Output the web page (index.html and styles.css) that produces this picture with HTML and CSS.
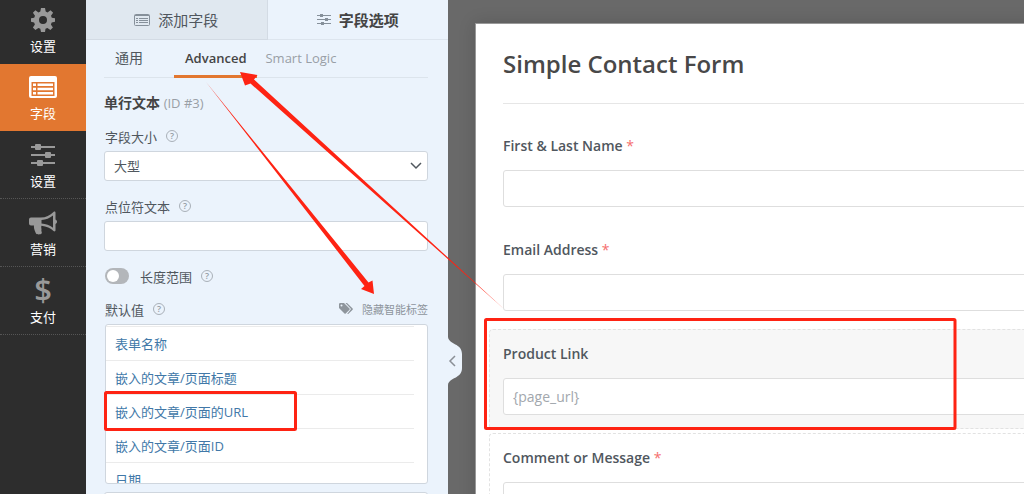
FILE: index.html
```html
<!DOCTYPE html>
<html lang="zh-CN">
<head>
  <meta charset="UTF-8">
  <meta name="viewport" content="width=device-width, initial-scale=1.0">
  <title>Simple Contact Form</title>
  <link rel="stylesheet" href="styles.css">
</head>
<body>
  <div class="builder">
    <nav class="sidebar">
      <a href="#setup" class="first">
        <svg width="24" height="24" viewBox="0 0 24 24" fill="currentColor" fill-rule="evenodd"><path d="M10 0h4l.7 3.6 1.8.8L19.600 2.300l2.500 2.500-2.100 3 .8 2L24 10.300v3.500l-3.300.7-.8 1.900 2 3-2.500 2.500-3-2-1.900.8L14 24h-4l-.7-3.300-1.900-.8-3 2-2.500-2.500 2-3-.8-1.900L0 13.800v-3.500l3.200-.5.8-2-2.100-3 2.500-2.500 3.100 2.100 1.800-.8zM12 8a4 4 0 1 0 0 8a4 4 0 0 0 0-8z"/></svg>
        <span>设置</span>
      </a>
      <a href="#fields" class="active">
        <svg width="28" height="24" viewBox="0 0 28 24" fill="currentColor" fill-rule="evenodd"><path d="M2 1h24a2 2 0 0 1 2 2v18a2 2 0 0 1-2 2H2a2 2 0 0 1-2-2V3a2 2 0 0 1 2-2zM2.500 7v14h23V7zM4 8.500h3V11H4zM8.500 8.500H24V11H8.500zM4 12.700h3v2.500H4zM8.500 12.700H24v2.500H8.500zM4 17h3v2.500H4zM8.500 17H24v2.500H8.500z"/></svg>
        <span>字段</span>
      </a>
      <a href="#settings">
        <svg width="24" height="24" viewBox="0 0 24 24" fill="currentColor"><path d="M0 3h24v2H0zM0 11h24v2H0zM0 19h24v2H0z"/><rect x="4" y="1" width="6" height="6" rx="1"/><rect x="14" y="9" width="6" height="6" rx="1"/><rect x="6" y="17" width="6" height="6" rx="1"/></svg>
        <span>设置</span>
      </a>
      <a href="#marketing">
        <svg width="28" height="24" viewBox="0 0 28 24" fill="currentColor" fill-rule="evenodd"><path d="M2 6.500h9.500C17 6.500 21 4.500 24.500 1c1-.8 2-.3 2 .8V8.500c2 .8 2 3.700 0 4.500v6.200c0 1.100-1 1.600-2 .8-3-2.700-7-4.700-12-5.200-.8 2 .5 3.500-.2 4.800.2 1.300 1 2 .2 3-1 1.200-4.500 1.200-5.500 0-1-2.600-2.500-4.800-2-8.100H2a2 2 0 0 1-2-2V8.500a2 2 0 0 1 2-2zM24 4.500c-3.500 2.800-7 4.100-11.500 4.500v3.500c4.500.4 8 1.700 11.500 4.300z"/></svg>
        <span>营销</span>
      </a>
      <a href="#payments">
        <b class="dollar">$</b>
        <span>支付</span>
      </a>
    </nav>

    <aside class="panel">
      <div class="tabs">
        <button type="button" class="tab">
          <svg width="16" height="12" viewBox="0 0 16 12" fill="none" stroke="currentColor"><rect x=".5" y=".5" width="15" height="11" rx="1"/><path d="M1 1.500h14M2 4.500h2M5 4.500h9M2 6.500h2M5 6.500h9M2 8.500h2M5 8.500h9"/></svg>
          添加字段
        </button>
        <button type="button" class="tab current">
          <svg width="14" height="12" viewBox="0 0 14 12" fill="currentColor"><path d="M0 1h14v1H0zM0 5h14v1H0zM0 9h14v1H0z"/><rect x="3" y="0" width="3" height="3"/><rect x="8" y="4" width="3" height="3"/><rect x="4" y="8" width="3" height="3"/></svg>
          字段选项
        </button>
      </div>

      <div class="options">
        <div class="subtabs">
          <a href="#general">通用</a>
          <a href="#advanced" class="current">Advanced</a>
          <a href="#logic" class="muted">Smart Logic</a>
        </div>

        <h3>单行文本 <span>(ID #3)</span></h3>

        <div class="row">
          <label for="size">字段大小</label>
          <button type="button" class="help">?</button>
        </div>
        <div class="select-box">
          <select id="size" name="size">
            <option>大型</option>
          </select>
          <svg width="12" height="8" viewBox="0 0 12 8" fill="none" stroke="currentColor" stroke-width="1.500"><path d="M1 1l5 5 5-5"/></svg>
        </div>

        <div class="row">
          <label for="placeholder">点位符文本</label>
          <button type="button" class="help">?</button>
        </div>
        <input type="text" id="placeholder" name="placeholder" class="text">

        <div class="row limit">
          <input type="checkbox" id="limit" name="limit" class="toggle">
          <label for="limit">长度范围</label>
          <button type="button" class="help">?</button>
        </div>

        <div class="row default">
          <label for="default">默认值</label>
          <button type="button" class="help">?</button>
          <a href="#tags" class="smart-tags">
            <svg width="14" height="12" viewBox="0 0 14 12" fill="currentColor" fill-rule="evenodd"><path d="M0 1.200Q0 0 1.200 0H5l5.500 5.500q.6.600 0 1.200L6.700 10.500q-.6.600-1.200 0L0 5zM2.500 1.500a1 1 0 1 0 0 2a1 1 0 0 0 0-2zM6.500 0H8l5.600 5.500q.6.600 0 1.200L9.500 10.800q-.6.500-1.200 0L12 6z"/></svg>
            隐藏智能标签
          </a>
        </div>
        <ul class="tag-list">
          <li><a href="#form_name">表单名称</a></li>
          <li><a href="#page_title">嵌入的文章/页面标题</a></li>
          <li><a href="#page_url">嵌入的文章/页面的URL</a></li>
          <li><a href="#page_id">嵌入的文章/页面ID</a></li>
          <li><a href="#date">日期</a></li>
        </ul>
        <input type="text" id="default" name="default" class="text">
      </div>

      <button type="button" class="collapse" aria-label="Collapse">
        <svg width="14" height="48" viewBox="0 0 14 48"><path fill="#ebf3fc" d="M0 0c1 8 14 6 14 17v14c0 11-13 9-14 17z"/><path d="M7 19l-5 5 5 5" fill="none" stroke="#8a8f96" stroke-width="1.500"/></svg>
      </button>
    </aside>

    <main class="preview">
      <form class="form-card">
        <h1>Simple Contact Form</h1>
        <div class="field">
          <label for="name">First &amp; Last Name <em>*</em></label>
          <input type="text" id="name" name="name">
        </div>
        <div class="field">
          <label for="email">Email Address <em>*</em></label>
          <input type="email" id="email" name="email">
        </div>
        <div class="field selected">
          <label for="link">Product Link</label>
          <input type="text" id="link" name="link" placeholder="{page_url}">
        </div>
        <div class="field outlined">
          <label for="message">Comment or Message <em>*</em></label>
          <textarea id="message" name="message"></textarea>
        </div>
      </form>
    </main>
  </div>

  <!-- red boxes and arrows over the builder -->
  <svg class="notes" width="1024" height="494" viewBox="0 0 1024 494" aria-hidden="true">
    <g fill="none" stroke="#fe2313" stroke-width="3">
      <rect x="105.500" y="392.500" width="190" height="37" rx="1"/>
      <rect x="485.500" y="319.500" width="469.500" height="109" rx="1"/>
    </g>
    <g fill="#fe2313">
      <path d="M206 82L368.500 282.500L372.500 280.500L374 294L361 289L364.500 286z"/>
      <path d="M504 309L254 79.500L257.500 75L240 72L245 85.500L250.500 83.500z"/>
    </g>
  </svg>
</body>
</html>
```

FILE: styles.css
```css
* {
  box-sizing: border-box;
}
body {
  margin: 0;
  font-family: "Open Sans", "Noto Sans CJK SC", sans-serif;
  font-size: 13px;
  color: #50575e;
  overflow: hidden;
}
a {
  text-decoration: none;
  color: inherit;
}
button, input, select, textarea {
  font: inherit;
  color: inherit;
}
button {
  padding: 0;
  border: none;
  background: none;
  cursor: pointer;
}
.builder {
  display: flex;
  height: 100vh;
  overflow: hidden;
}

/* Sidebar */
.sidebar {
  flex: 0 0 86px;
  background-color: #2d2d2d;
}
.sidebar a {
  display: flex;
  flex-direction: column;
  align-items: center;
  gap: 5px;
  height: 68px;
  padding-top: 12px;
  border-bottom: 1px dotted #555;
  line-height: 18px;
  color: #fff;
}
.sidebar svg, .dollar {
  color: #999;
}
.sidebar .first {
  height: 64px;
  padding-top: 8px;
  border: none;
}
.sidebar .active {
  height: 67px;
  padding-top: 11px;
  border: none;
  background-color: #e27730;
}
.sidebar .active svg {
  color: #fff;
}
.dollar {
  height: 24px;
  font-size: 31px;
  font-weight: 600;
  line-height: 20px;
}

/* Options panel */
.panel {
  position: relative;
  flex: 0 0 362px;
  background-color: #ebf3fc;
}
.tabs {
  display: flex;
}
.tab {
  flex: 1;
  display: flex;
  align-items: center;
  justify-content: center;
  gap: 8px;
  height: 40px;
  border-right: 1px solid #d3dbe4;
  border-bottom: 1px solid #d3dbe4;
  background-color: #e0e8f0;
  font-size: 15px;
}
.tab svg {
  color: #86909a;
}
.tab.current {
  border-right: none;
  border-bottom-color: #dde5ee;
  background-color: transparent;
  font-weight: bold;
  color: #444;
}
.options {
  padding: 0 20px 0 18px;
}
.subtabs {
  display: flex;
  border-bottom: 1px solid #dce4ec;
  line-height: 34px;
}
.subtabs a {
  margin-bottom: -1px;
  padding: 1px 11px 0;
  border-bottom: 3px solid transparent;
}
.subtabs a:first-child {
  margin-right: 20px;
  font-size: 14px;
}
.subtabs .current {
  border-color: #e27730;
  font-weight: 600;
  color: #444;
}
.subtabs .muted {
  padding: 1px 8px 0;
  color: #999fa6;
}
h3 {
  margin: 15px 0 13px;
  font-size: 14px;
  line-height: 20px;
  color: #444;
}
h3 span {
  font-size: 13px;
  font-weight: normal;
  color: #999fa6;
}
.row {
  display: flex;
  align-items: center;
  gap: 9px;
  height: 20px;
  margin-bottom: 5px;
  padding-left: 1px;
}
.help {
  width: 12px;
  height: 12px;
  border: 1px solid #a9b0b8;
  border-radius: 50%;
  font-size: 9px;
  font-weight: 600;
  line-height: 10px;
  color: #969da5;
}
.select-box {
  display: grid;
  align-items: center;
  margin-bottom: 15px;
}
.select-box select, .select-box svg {
  grid-area: 1 / 1;
}
.select-box svg {
  justify-self: end;
  margin-right: 6px;
  pointer-events: none;
}
.select-box select, .text {
  width: 100%;
  height: 30px;
  padding: 0 9px;
  border: 1px solid #cfd6de;
  border-radius: 3px;
  background-color: #fff;
}
.select-box select {
  appearance: none;
}
.limit {
  margin: 15px 0 13px;
}
.toggle {
  appearance: none;
  display: flex;
  width: 24px;
  height: 16px;
  margin: 0 2px 0 0;
  padding: 2px;
  border-radius: 8px;
  background-color: #b3b6ba;
}
.toggle::before {
  content: "";
  width: 12px;
  height: 12px;
  border-radius: 50%;
  background-color: #fff;
}
.toggle:checked {
  justify-content: flex-end;
  background-color: #e27730;
}
.smart-tags {
  display: flex;
  align-items: center;
  gap: 9px;
  margin-left: auto;
  font-size: 11px;
  color: #8e959c;
}
.tag-list {
  height: 160px;
  margin: 0 0 8px 1px;
  padding: 1px 13px 0 0;
  border: 1px solid #cfd6de;
  border-radius: 3px;
  background-color: #fff;
  list-style: none;
  overflow: hidden;
}
.tag-list li {
  height: 34px;
  padding-left: 9px;
  border-top: 1px solid #ebebeb;
  line-height: 34px;
  color: #4178a8;
}
.collapse {
  position: absolute;
  top: 337px;
  left: 100%;
  height: 48px;
}
.collapse svg {
  display: block;
}

/* Form preview */
.preview {
  flex: 1;
  min-width: 0;
  padding: 23px 0 0 27px;
  background-color: #696969;
  overflow: hidden;
}
.form-card {
  min-width: 680px;
  padding: 18px 13px;
  border: 1px solid #999;
  border-width: 1px 0 0 1px;
  background-color: #fff;
  box-shadow: 0 0 16px rgba(0, 0, 0, 0.15);
}
h1 {
  margin: 0 14px 17px;
  padding: 5px 0 23px;
  border-bottom: 1px solid #e6e6e6;
  font-size: 24px;
  font-weight: 600;
  line-height: 33px;
  color: #484848;
}
.field {
  margin-bottom: 4px;
  padding: 13px;
  border: 1px dashed transparent;
  border-radius: 4px;
}
.field label {
  display: block;
  margin-bottom: 13px;
  font-size: 14px;
  font-weight: 600;
  line-height: 22px;
}
.field em {
  font-style: normal;
  font-weight: normal;
  color: #f56e6e;
}
.field input, .field textarea {
  display: block;
  width: 100%;
  height: 37px;
  padding: 0 9px;
  border: 1px solid #dedede;
  border-radius: 3px;
  background-color: #fff;
  font-size: 14px;
}
.field textarea {
  height: 110px;
  resize: none;
}
.field ::placeholder {
  color: #a2a7ad;
}
.field.selected {
  border-color: #e2e2e2;
  background-color: #f7f7f7;
}
.field.outlined {
  border-color: #e2e2e2;
}

.notes {
  position: absolute;
  top: 0;
  left: 0;
  pointer-events: none;
}
```
